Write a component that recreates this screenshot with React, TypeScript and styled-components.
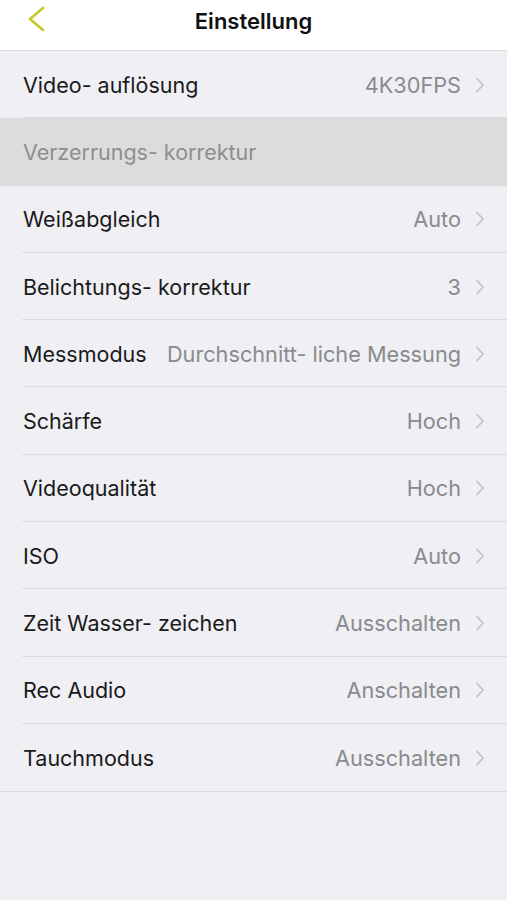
import React from "react";
import styled, { createGlobalStyle } from "styled-components";

const GlobalStyle = createGlobalStyle`
  body {
    margin: 0;
    background: #efeff4;
    font-family: Inter, "Noto Sans", sans-serif;
  }
`;

const Page = styled.div`
  width: 507px;
  min-height: 900px;
  background: #efeff4;
`;

const Header = styled.div`
  display: flex;
  align-items: center;
  justify-content: center;
  position: relative;
  height: 51px;
  padding-bottom: 9px;
  box-sizing: border-box;
  background: #ffffff;
  border-bottom: 1px solid #dcdce0;
`;

const BackBtn = styled.div`
  position: absolute;
  left: 26px;
  top: 5px;
  width: 20px;
  height: 28px;
  display: flex;
  align-items: center;
  justify-content: center;
`;

const Title = styled.h1`
  margin: 0;
  font-size: 22px;
  font-weight: 600;
  color: #111111;
`;

const List = styled.div`
  display: flex;
  flex-direction: column;
  border-bottom: 1px solid #dcdce0;
`;

const Row = styled.div<{ disabled?: boolean }>`
  display: flex;
  align-items: center;
  height: 67.3px;
  padding: 0 22px 0 23px;
  background: ${(props) => (props.disabled ? "#dcdcdc" : "#efeff4")};
  position: relative;
  &:not(:last-child)::after {
    content: "";
    position: absolute;
    left: 22px;
    right: 0;
    bottom: 0;
    height: 1px;
    background: #dcdce0;
  }
`;

const Label = styled.span<{ disabled?: boolean }>`
  font-size: 21.5px;
  color: ${(props) => (props.disabled ? "#8e8e8e" : "#1a1a1a")};
  white-space: nowrap;
`;

const Value = styled.span`
  margin-left: auto;
  font-size: 21.7px;
  color: #8a8a8e;
  white-space: nowrap;
`;

const Chevron = styled.svg`
  margin-left: 14px;
  flex-shrink: 0;
`;

const items = [
  { label: "Video- auflösung", value: "4K30FPS" },
  { label: "Verzerrungs- korrektur", disabled: true },
  { label: "Weißabgleich", value: "Auto" },
  { label: "Belichtungs- korrektur", value: "3" },
  { label: "Messmodus", value: "Durchschnitt- liche Messung" },
  { label: "Schärfe", value: "Hoch" },
  { label: "Videoqualität", value: "Hoch" },
  { label: "ISO", value: "Auto" },
  { label: "Zeit Wasser- zeichen", value: "Ausschalten" },
  { label: "Rec Audio", value: "Anschalten" },
  { label: "Tauchmodus", value: "Ausschalten" },
];

const App = () => {
  return (
    <Page>
      <GlobalStyle />
      <Header>
        <BackBtn>
          <svg width="20" height="28" viewBox="0 0 20 28">
            <path
              d="M17 3 L4 14 L17 25"
              fill="none"
              stroke="#c6c922"
              strokeWidth="2.6"
              strokeLinecap="round"
              strokeLinejoin="round"
            />
          </svg>
        </BackBtn>
        <Title>Einstellung</Title>
      </Header>
      <List>
        {items.map((item) => (
          <Row key={item.label} disabled={item.disabled}>
            <Label disabled={item.disabled}>{item.label}</Label>
            {!item.disabled && (
              <>
                <Value>{item.value}</Value>
                <Chevron width="10" height="16" viewBox="0 0 10 16">
                  <path
                    d="M2 1.5 L8 8 L2 14.5"
                    fill="none"
                    stroke="#c4c4c7"
                    strokeWidth="1.8"
                    strokeLinecap="round"
                    strokeLinejoin="round"
                  />
                </Chevron>
              </>
            )}
          </Row>
        ))}
      </List>
    </Page>
  );
};

export default App;
